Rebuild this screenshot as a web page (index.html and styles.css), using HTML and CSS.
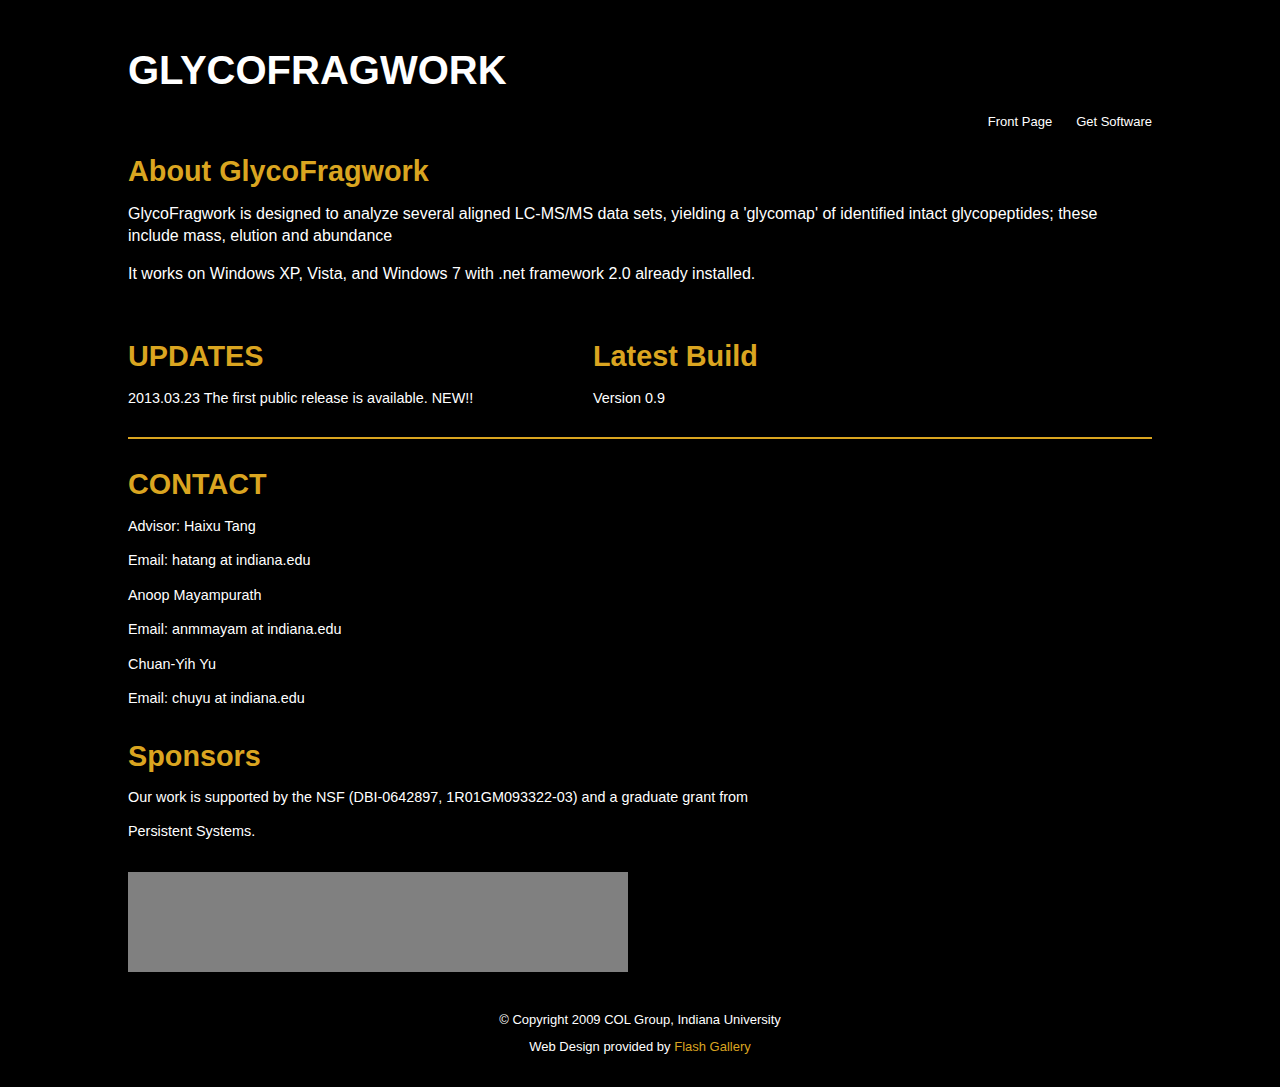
FILE: index.html
```html
<!DOCTYPE html>
<html>
<head>
<meta charset="utf-8">
<title>GlycoFragwork</title>
<link rel="stylesheet" href="styles.css">
</head>
<body>
<div class="page">
  <header class="header">
    <h1 class="logo">GLYCOFRAGWORK</h1>
    <nav class="nav">
      <a href="#">Front Page</a>
      <a href="#">Get Software</a>
    </nav>
  </header>

  <section class="about">
    <h2 class="heading">About GlycoFragwork</h2>
    <p class="lead">GlycoFragwork is designed to analyze several aligned LC-MS/MS data sets, yielding a 'glycomap' of identified intact glycopeptides; these include mass, elution and abundance</p>
    <p class="lead">It works on Windows XP, Vista, and Windows 7 with .net framework 2.0 already installed.</p>
  </section>

  <section class="columns">
    <div class="col col-left">
      <h2 class="heading">UPDATES</h2>
      <p class="small">2013.03.23 The first public release is available. NEW!!</p>
    </div>
    <div class="col">
      <h2 class="heading">Latest Build</h2>
      <p class="small">Version 0.9</p>
    </div>
  </section>

  <hr class="rule">

  <section class="contact">
    <h2 class="heading">CONTACT</h2>
    <p class="small">Advisor: Haixu Tang</p>
    <p class="small">Email: hatang at indiana.edu</p>
    <p class="small">Anoop Mayampurath</p>
    <p class="small">Email: anmmayam at indiana.edu</p>
    <p class="small">Chuan-Yih Yu</p>
    <p class="small">Email: chuyu at indiana.edu</p>
  </section>

  <section class="sponsors">
    <h2 class="heading">Sponsors</h2>
    <p class="small">Our work is supported by the NSF (DBI-0642897, 1R01GM093322-03) and a graduate grant from</p>
    <p class="small">Persistent Systems.</p>
    <div class="banner"></div>
  </section>

  <footer class="footer">
    <p>© Copyright 2009 COL Group, Indiana University</p>
    <p>Web Design provided by <a href="#">Flash Gallery</a></p>
  </footer>
</div>
</body>
</html>
```

FILE: styles.css
```css
html, body {
  margin: 0;
  padding: 0;
  background: #000;
}
body {
  font-family: "Liberation Sans", Arial, Helvetica, sans-serif;
  color: #fff;
}
.page {
  width: 1024px;
  margin: 0 auto;
  padding-top: 42px;
}
.header {
  display: flex;
  flex-direction: column;
}
.logo {
  margin: 0;
  font-size: 40px;
  line-height: 56px;
  font-weight: bold;
  color: #fff;
}
.nav {
  display: flex;
  justify-content: flex-end;
  gap: 24px;
  margin-top: 16px;
}
.nav a {
  color: #fff;
  text-decoration: none;
  font-size: 13px;
  line-height: 16px;
}
.heading {
  margin: 0;
  color: #daa520;
  font-size: 28.8px;
  font-weight: bold;
  line-height: 34px;
}
.about {
  margin-top: 24px;
  width: 1000px;
}
.lead {
  font-size: 16px;
  line-height: 22px;
  margin: 15px 0 0;
}
.lead + .lead {
  margin-top: 16px;
}
.columns {
  display: flex;
  margin-top: 54px;
}
.col-left {
  width: 465px;
}
.small {
  font-size: 14.4px;
  line-height: 20.5px;
  margin: 14px 0 0;
}
.columns .small {
  margin-top: 15px;
}
.contact .heading + .small {
  margin-top: 15px;
}
.rule {
  border: 0;
  height: 2px;
  background: #daa520;
  margin: 28px 0 0;
}
.contact {
  margin-top: 28px;
}
.sponsors {
  margin-top: 30px;
}
.banner {
  width: 500px;
  height: 100px;
  background: #808080;
  margin-top: 30px;
}
.footer {
  text-align: center;
  font-size: 13px;
  line-height: 16px;
  padding: 40px 0 16px;
}
.footer p {
  margin: 0 0 11px;
}
.footer a {
  color: #daa520;
  text-decoration: none;
}
```
